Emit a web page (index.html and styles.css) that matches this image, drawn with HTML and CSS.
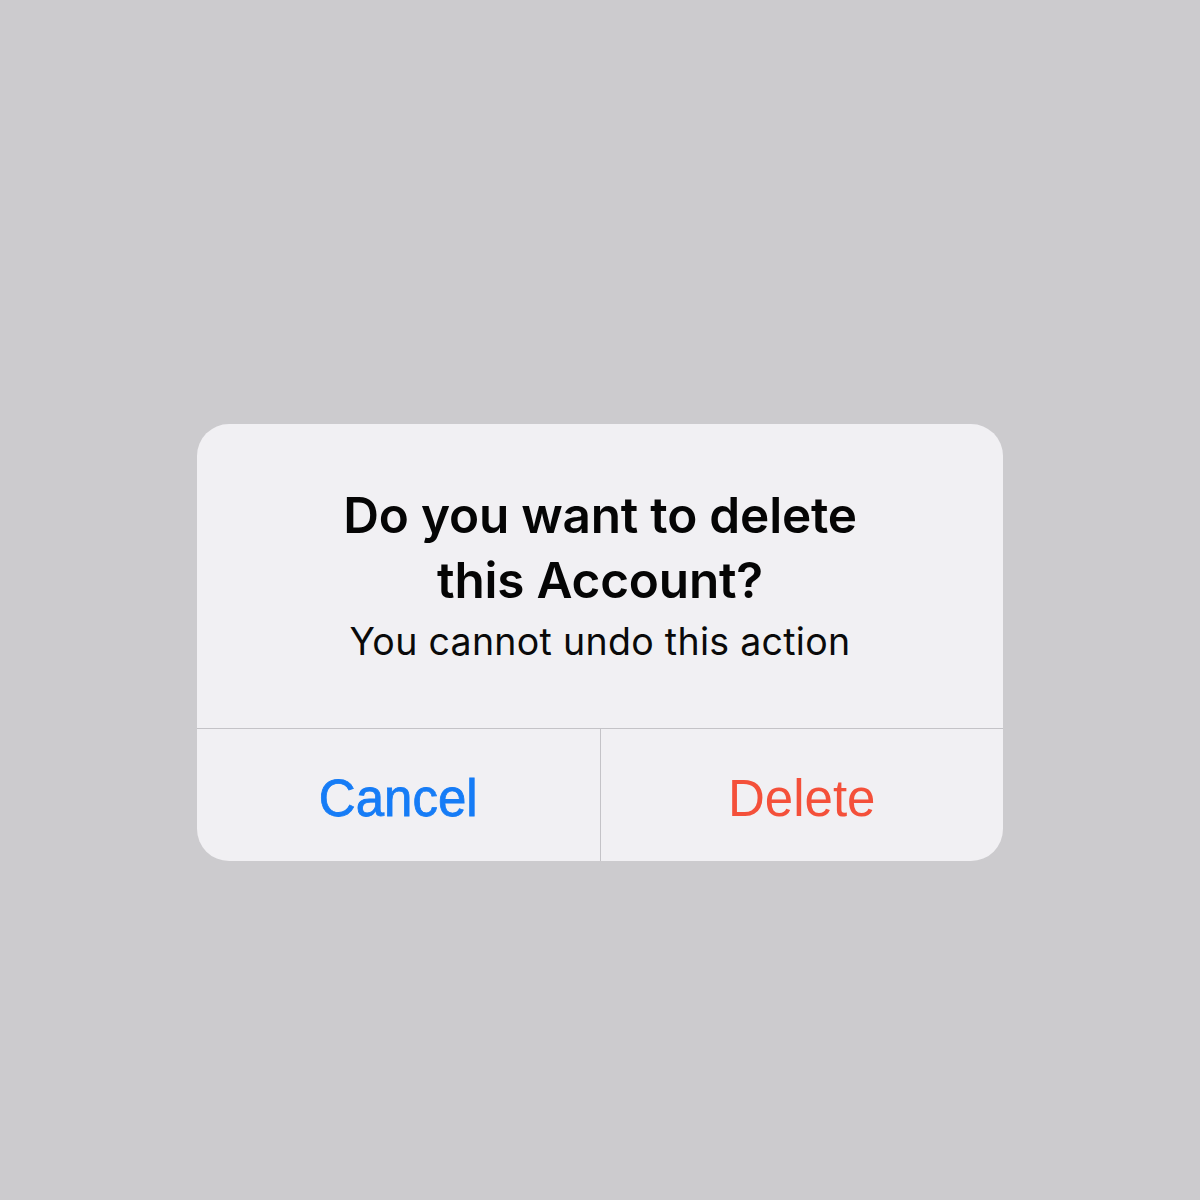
FILE: index.html
```html
<!DOCTYPE html>
<html lang="en">
<head>
    <meta charset="UTF-8">
    <meta name="viewport" content="width=device-width, initial-scale=1.0">
    <title>Delete Account</title>
    <link rel="stylesheet" href="styles.css">
</head>
<body>
    <div class="alert">
        <div class="alert-body">
            <h2 class="alert-title">Do you want to delete<br>this Account?</h2>
            <p class="alert-message">You cannot undo this action</p>
        </div>
        <div class="alert-actions">
            <button class="alert-btn btn-cancel">Cancel</button>
            <button class="alert-btn btn-delete">Delete</button>
        </div>
    </div>
</body>
</html>
```

FILE: styles.css
```css
* {
    margin: 0;
    padding: 0;
    box-sizing: border-box;
}

body {
    background: #cccbce;
    min-height: 100vh;
    padding-top: 424px;
    font-family: Inter, 'Noto Sans', sans-serif;
}

.alert {
    width: 806px;
    margin: 0 auto;
    background: #f1f0f3;
    border-radius: 32px;
    overflow: hidden;
}

.alert-body {
    padding: 59px 30px 64px;
    text-align: center;
    border-bottom: 1px solid #c4c3c7;
}

.alert-title {
    font-size: 49.5px;
    font-weight: 600;
    line-height: 65px;
    color: #050505;
    letter-spacing: -0.2px;
}

.alert-message {
    margin-top: 7px;
    font-size: 37.5px;
    line-height: 44px;
    color: #0a0a0a;
    letter-spacing: 0.3px;
}

.alert-actions {
    display: flex;
    height: 132px;
}

.alert-btn {
    flex: 1;
    background: none;
    border: none;
    padding-top: 6px;
    font-family: 'Liberation Sans', Arial, sans-serif;
    font-size: 51px;
    cursor: pointer;
}

.btn-cancel {
    color: #167cf6;
    border-right: 1px solid #c4c3c7;
    -webkit-text-stroke: 0.8px #167cf6;
}

.btn-delete {
    color: #f4503a;
}
```
